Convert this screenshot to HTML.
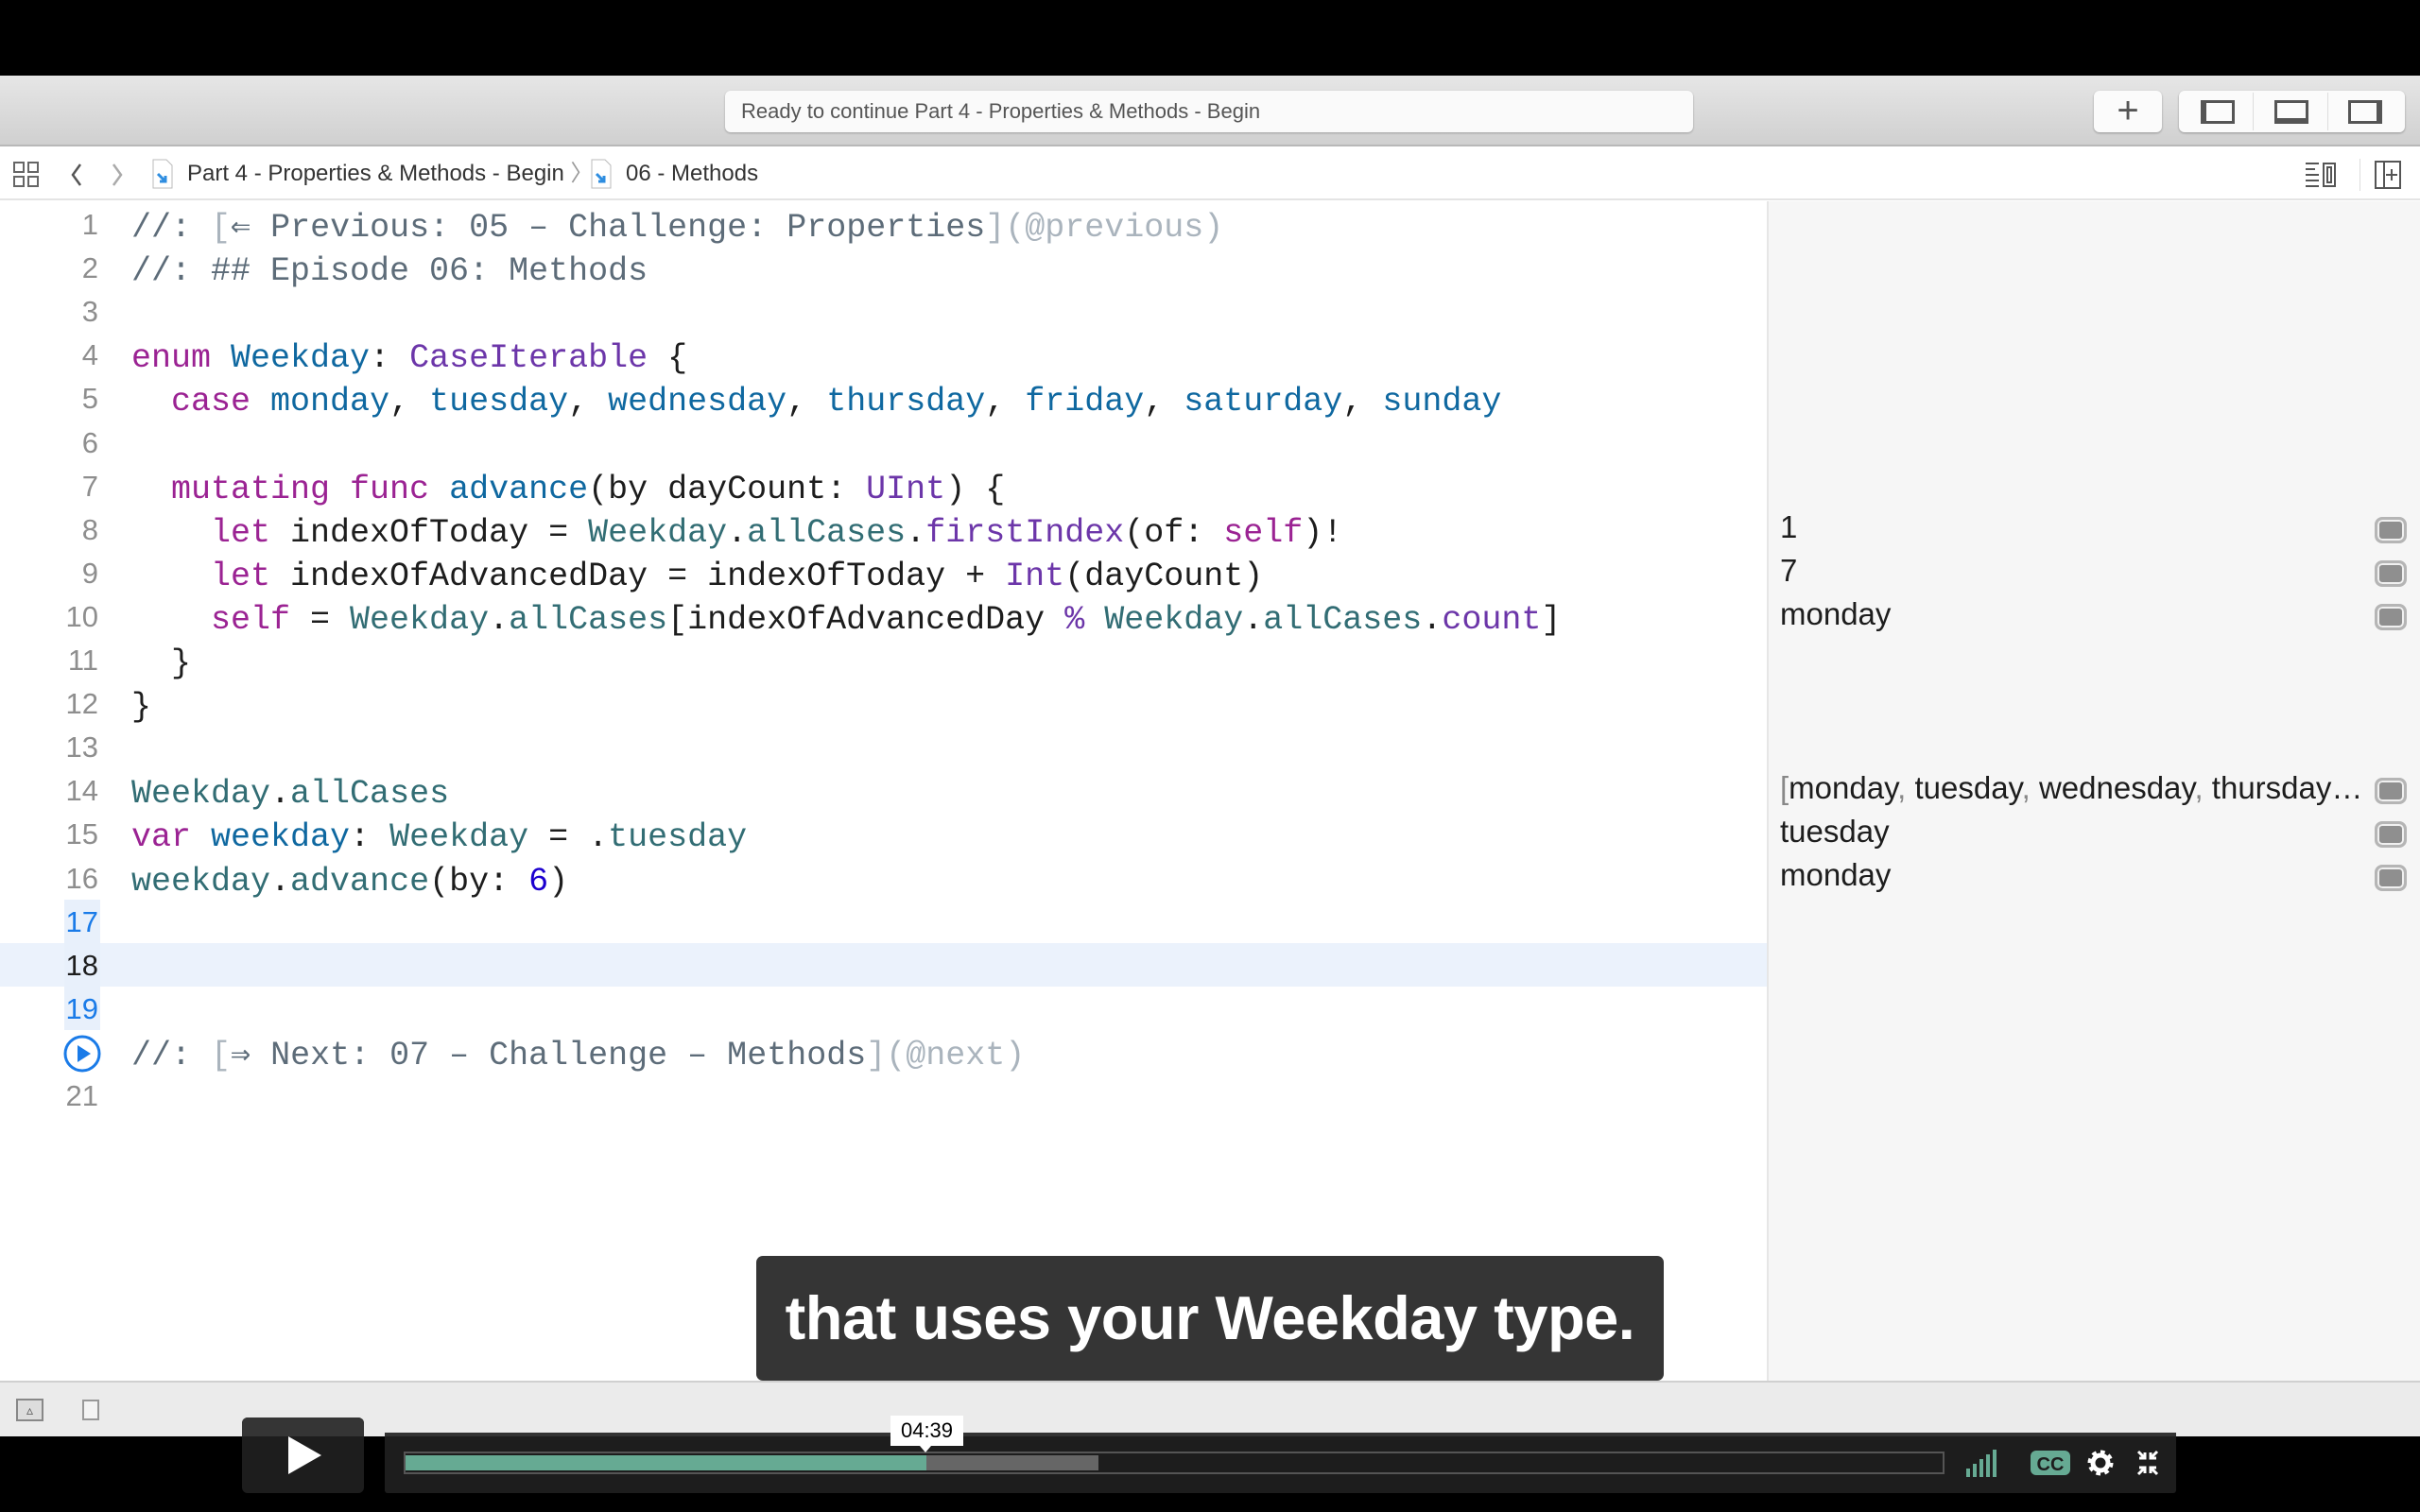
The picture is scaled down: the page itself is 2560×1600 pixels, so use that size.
<!DOCTYPE html>
<html><head><meta charset="utf-8"><style>
*{margin:0;padding:0;box-sizing:border-box}
body{width:2560px;height:1600px;position:relative;overflow:hidden;background:#fff;font-family:"Liberation Sans",sans-serif}
.abs{position:absolute}
.code{position:absolute;left:139px;font-family:"Liberation Mono",monospace;font-size:35px;color:#1d1d1d;white-space:pre;height:46px;line-height:46px;margin-top:3px}
.ln{position:absolute;left:40px;width:64px;text-align:right;font-size:31px;color:#8e8e8e;height:46px;line-height:46px}
.k{color:#9b2393}
.t{color:#0f68a0}
.p{color:#6c36a9}
.m{color:#326d74}
.c{color:#5d6c79}
.cl{color:#aab4bd}
.n{color:#1c00cf}
.r{position:absolute;left:1883px;font-size:33px;color:#1d1d1d;height:46px;line-height:46px}
.qi{position:absolute;left:2512px;width:34px;height:28px;border:3px solid #b5b5b5;border-radius:8px;background:#8f8f8f;box-shadow:inset 0 0 0 2px #f0f0f0}
.btn{position:absolute;top:96px;height:44px;background:#fbfbfb;border-radius:6px;box-shadow:0 1px 2px rgba(0,0,0,.3)}
</style></head><body>
<div class="abs" style="left:0;top:0;width:2560px;height:80px;background:#000"></div>
<div class="abs" style="left:0;top:80px;width:2560px;height:75px;background:linear-gradient(#e6e6e6,#d0d0d0);border-bottom:2px solid #b8b8b8"></div>
<div class="abs" style="left:767px;top:96px;width:1024px;height:44px;background:#fafafa;border-radius:6px;box-shadow:0 1px 2px rgba(0,0,0,.25);font-size:22px;color:#555;line-height:44px;padding-left:17px">Ready to continue Part 4 - Properties &amp; Methods - Begin</div>
<div class="btn" style="left:2215px;width:72px;font-size:40px;color:#555;text-align:center;line-height:42px">+</div>
<div class="btn" style="left:2305px;width:239px"></div>
<div class="abs" style="left:2383px;top:98px;width:1px;height:40px;background:#ddd"></div>
<div class="abs" style="left:2462px;top:98px;width:1px;height:40px;background:#ddd"></div>
<div class="abs" style="left:2328px;top:106px;width:36px;height:25px;border:3px solid #555;border-left-width:6px"></div>
<div class="abs" style="left:2406px;top:106px;width:36px;height:25px;border:3px solid #555;border-bottom-width:6px"></div>
<div class="abs" style="left:2484px;top:106px;width:36px;height:25px;border:3px solid #555;border-right-width:6px"></div>
<!-- breadcrumb -->
<div class="abs" style="left:0;top:157px;width:2560px;height:55px;background:#fff;border-bottom:2px solid #e4e4e4"></div>
<svg class="abs" style="left:13px;top:170px" width="30" height="30" viewBox="0 0 30 30" fill="none" stroke="#666" stroke-width="2"><rect x="2" y="2" width="10" height="10"/><rect x="17" y="2" width="10" height="10"/><rect x="2" y="17" width="10" height="10"/><rect x="17" y="17" width="10" height="10"/></svg>
<svg class="abs" style="left:70px;top:170px" width="60" height="30" viewBox="0 0 60 30" fill="none" stroke-width="2.5"><path d="M15 4 L7 15 L15 26" stroke="#555"/><path d="M50 4 L58 15 L50 26" stroke="#aaa"/></svg>
<svg class="abs" style="left:160px;top:168px" width="24" height="32" viewBox="0 0 24 32"><path d="M2 1h14l6 6v24H2z" fill="#fff" stroke="#bbb"/><path d="M7 16l8 8M15 18v6h-6" stroke="#2e8de0" stroke-width="3" fill="none"/></svg>
<div class="abs" style="left:198px;top:168px;font-size:24px;color:#333;line-height:32px">Part 4 - Properties &amp; Methods - Begin <span style="color:#999">〉</span></div>
<svg class="abs" style="left:624px;top:168px" width="24" height="32" viewBox="0 0 24 32"><path d="M2 1h14l6 6v24H2z" fill="#fff" stroke="#bbb"/><path d="M7 16l8 8M15 18v6h-6" stroke="#2e8de0" stroke-width="3" fill="none"/></svg>
<div class="abs" style="left:662px;top:168px;font-size:24px;color:#333;line-height:32px">06 - Methods</div>
<svg class="abs" style="left:2438px;top:170px" width="40" height="30" viewBox="0 0 40 30" fill="none" stroke="#555" stroke-width="2"><path d="M1 3h14M1 9h10M1 15h14M1 21h14M1 27h14"/><rect x="20" y="3" width="12" height="24"/><rect x="24" y="7" width="4" height="16"/></svg>
<div class="abs" style="left:2496px;top:168px;width:1px;height:34px;background:#ddd"></div>
<svg class="abs" style="left:2512px;top:170px" width="28" height="30" viewBox="0 0 28 30" fill="none" stroke="#555" stroke-width="2"><rect x="1" y="1" width="26" height="28"/><path d="M10 1v28M18 9v12M12 15h12"/></svg>
<!-- results sidebar -->
<div class="abs" style="left:1869px;top:213px;width:691px;height:1250px;background:#f6f6f6;border-left:2px solid #e6e6e6"></div>
<!-- highlight -->
<div class="abs" style="left:0;top:998px;width:1869px;height:46px;background:#ebf2fc"></div>
<div class="abs" style="left:68px;top:952px;width:38px;height:138px;background:#e8f0fb"></div>
<!-- line numbers -->
<div class="ln" style="top:215px">1</div>
<div class="ln" style="top:261px">2</div>
<div class="ln" style="top:307px">3</div>
<div class="ln" style="top:353px">4</div>
<div class="ln" style="top:399px">5</div>
<div class="ln" style="top:446px">6</div>
<div class="ln" style="top:492px">7</div>
<div class="ln" style="top:538px">8</div>
<div class="ln" style="top:584px">9</div>
<div class="ln" style="top:630px">10</div>
<div class="ln" style="top:676px">11</div>
<div class="ln" style="top:722px">12</div>
<div class="ln" style="top:768px">13</div>
<div class="ln" style="top:814px">14</div>
<div class="ln" style="top:860px">15</div>
<div class="ln" style="top:907px">16</div>
<div class="ln" style="top:953px;color:#1a7be8">17</div>
<div class="ln" style="top:999px;color:#1d1d1d">18</div>
<div class="ln" style="top:1045px;color:#1a7be8">19</div>
<svg class="abs" style="left:66px;top:1094px" width="42" height="42" viewBox="0 0 42 42"><circle cx="21" cy="21" r="18" fill="#fff" stroke="#1a7be8" stroke-width="3"/><path d="M16 12 L30 21 L16 30Z" fill="#1a7be8"/></svg>
<div class="ln" style="top:1137px">21</div>
<!-- code -->
<div class="code c" style="top:215px">//: <span class="cl">[</span>⇐ Previous: 05 – Challenge: Properties<span class="cl">](@previous)</span></div>
<div class="code c" style="top:261px">//: ## Episode 06: Methods</div>
<div class="code" style="top:353px"><span class="k">enum</span> <span class="t">Weekday</span>: <span class="p">CaseIterable</span> {</div>
<div class="code" style="top:399px">  <span class="k">case</span> <span class="t">monday</span>, <span class="t">tuesday</span>, <span class="t">wednesday</span>, <span class="t">thursday</span>, <span class="t">friday</span>, <span class="t">saturday</span>, <span class="t">sunday</span></div>
<div class="code" style="top:492px">  <span class="k">mutating func</span> <span class="t">advance</span>(by dayCount: <span class="p">UInt</span>) {</div>
<div class="code" style="top:538px">    <span class="k">let</span> indexOfToday = <span class="m">Weekday</span>.<span class="m">allCases</span>.<span class="p">firstIndex</span>(of: <span class="k">self</span>)!</div>
<div class="code" style="top:584px">    <span class="k">let</span> indexOfAdvancedDay = indexOfToday + <span class="p">Int</span>(dayCount)</div>
<div class="code" style="top:630px">    <span class="k">self</span> = <span class="m">Weekday</span>.<span class="m">allCases</span>[indexOfAdvancedDay <span class="p">%</span> <span class="m">Weekday</span>.<span class="m">allCases</span>.<span class="p">count</span>]</div>
<div class="code" style="top:676px">  }</div>
<div class="code" style="top:722px">}</div>
<div class="code" style="top:814px"><span class="m">Weekday</span>.<span class="m">allCases</span></div>
<div class="code" style="top:860px"><span class="k">var</span> <span class="t">weekday</span>: <span class="m">Weekday</span> = .<span class="m">tuesday</span></div>
<div class="code" style="top:907px"><span class="m">weekday</span>.<span class="m">advance</span>(by: <span class="n">6</span>)</div>
<div class="code c" style="top:1091px">//: <span class="cl">[</span>⇒ Next: 07 – Challenge – Methods<span class="cl">](@next)</span></div>
<!-- results -->
<div class="r" style="top:535px">1</div>
<div class="r" style="top:581px">7</div>
<div class="r" style="top:627px">monday</div>
<div class="r" style="top:811px"><span style="color:#888">[</span>monday<span style="color:#888">,</span> tuesday<span style="color:#888">,</span> wednesday<span style="color:#888">,</span> thursday…</div>
<div class="r" style="top:857px">tuesday</div>
<div class="r" style="top:903px">monday</div>
<div class="qi" style="top:547px"></div>
<div class="qi" style="top:593px"></div>
<div class="qi" style="top:639px"></div>
<div class="qi" style="top:823px"></div>
<div class="qi" style="top:869px"></div>
<div class="qi" style="top:915px"></div>
<!-- subtitle -->
<div class="abs" style="left:800px;top:1329px;width:960px;height:132px;background:#353535;border-radius:7px;color:#fff;font-weight:bold;font-size:65px;text-align:center;line-height:132px;letter-spacing:-0.5px">that uses your Weekday type.</div>
<!-- bottom bar -->
<div class="abs" style="left:0;top:1461px;width:2560px;height:59px;background:#ebebeb;border-top:2px solid #d0d0d0"></div>
<div class="abs" style="left:17px;top:1480px;width:29px;height:24px;border:2px solid #888;background:#ddd;font-size:14px;color:#555;text-align:center;line-height:20px">▵</div>
<div class="abs" style="left:87px;top:1481px;width:18px;height:22px;border:2px solid #999;background:#f4f4f4"></div>
<div class="abs" style="left:0;top:1520px;width:2560px;height:80px;background:#000"></div>
<!-- player -->
<div class="abs" style="left:256px;top:1500px;width:129px;height:80px;background:#1d1d1d;border-radius:6px"></div>
<div class="abs" style="left:256px;top:1500px;width:129px;height:20px;background:#353535;border-radius:6px 6px 0 0"></div>
<svg class="abs" style="left:300px;top:1518px" width="45" height="44" viewBox="0 0 45 44"><path d="M5 2 L40 22 L5 42Z" fill="#fff"/></svg>
<div class="abs" style="left:407px;top:1516px;width:1895px;height:64px;background:#1d1d1d;border-radius:3px"></div>
<div class="abs" style="left:407px;top:1516px;width:1895px;height:4px;background:#333"></div>
<div class="abs" style="left:427px;top:1536px;width:1630px;height:24px;border:2px solid #555;background:#1d1d1d"></div>
<div class="abs" style="left:429px;top:1540px;width:551px;height:16px;background:#66aa93"></div>
<div class="abs" style="left:980px;top:1540px;width:182px;height:16px;background:#666"></div>
<div class="abs" style="left:942px;top:1498px;width:77px;height:32px;background:#fff;color:#000;font-size:22px;text-align:center;line-height:32px">04:39</div>
<div class="abs" style="left:973px;top:1530px;width:0;height:0;border-left:6px solid transparent;border-right:6px solid transparent;border-top:7px solid #fff"></div>
<svg class="abs" style="left:2080px;top:1532px" width="180" height="32" viewBox="0 0 180 32"><g fill="#66aa93"><rect x="0" y="22" width="4" height="9"/><rect x="7" y="17" width="4" height="14"/><rect x="14" y="12" width="4" height="19"/><rect x="21" y="7" width="4" height="24"/><rect x="28" y="2" width="4" height="29"/><rect x="68" y="3" width="42" height="26" rx="6"/></g><text x="89" y="24" font-family="Liberation Sans" font-weight="bold" font-size="20" fill="#1d1d1d" text-anchor="middle">CC</text><circle cx="142" cy="16" r="10" fill="none" stroke="#fff" stroke-width="7" stroke-dasharray="4 3.8"/><circle cx="142" cy="16" r="8" fill="none" stroke="#fff" stroke-width="5"/></svg>
<svg class="abs" style="left:2260px;top:1534px" width="24" height="28" viewBox="0 0 24 28" fill="none" stroke="#fff" stroke-width="3"><path d="M2 2l7 7M9 3v6H3M22 2l-7 7M15 3v6h6M2 26l7-7M9 25v-6H3M22 26l-7-7M15 25v-6h6"/></svg>
</body></html>
